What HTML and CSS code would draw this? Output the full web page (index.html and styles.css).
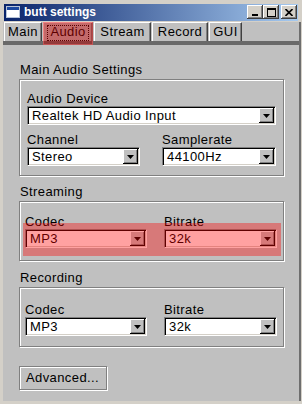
FILE: index.html
```html
<!DOCTYPE html>
<html>
<head>
<meta charset="utf-8">
<title>butt settings</title>
<link rel="stylesheet" href="styles.css">
</head>
<body>
<div class="window">
  <div class="titlebar">
    <svg class="app-icon" width="14" height="12" viewBox="0 0 14 12"><rect x="0.5" y="0.5" width="13" height="11" fill="#fff" stroke="#b8c4d8"/><rect x="1" y="1" width="12" height="3" fill="#1c48a0"/></svg>
    <span class="title">butt settings</span>
    <div class="caption-btns">
      <span class="cbtn"><svg width="8" height="8" viewBox="0 0 8 8"><rect x="1" y="6" width="6" height="2" fill="#000"/></svg></span>
      <span class="cbtn"><svg width="9" height="9" viewBox="0 0 9 9"><rect x="0.5" y="0.5" width="8" height="8" fill="none" stroke="#000"/><rect x="0" y="0" width="9" height="2" fill="#000"/></svg></span>
      <span class="cbtn cbtn-close"><svg width="8" height="7" viewBox="0 0 8 7"><path d="M0.5 0 L7.5 7 M7.5 0 L0.5 7" stroke="#000" stroke-width="1.6" fill="none"/></svg></span>
    </div>
  </div>
  <div class="frame-body">
    <div class="tabs">
      <div class="tab tab-main">Main</div>
      <div class="tab tab-audio tab-active">Audio</div>
      <div class="tab tab-stream">Stream</div>
      <div class="tab tab-record">Record</div>
      <div class="tab tab-gui">GUI</div>
    </div>
    <div class="tab-band"></div>
    <div class="panel">
      <section class="group group-main">
        <div class="group-label">Main Audio Settings</div>
        <div class="frame frame-main">
          <div class="field">
            <div class="field-label">Audio Device</div>
            <div class="choice"><span class="choice-text">Realtek HD Audio Input</span><span class="choice-btn"><svg width="7" height="4" viewBox="0 0 7 4"><polygon points="0,0 7,0 3.5,4" fill="#000"/></svg></span></div>
          </div>
          <div class="row row-main">
            <div class="field">
              <div class="field-label">Channel</div>
              <div class="choice"><span class="choice-text">Stereo</span><span class="choice-btn"><svg width="7" height="4" viewBox="0 0 7 4"><polygon points="0,0 7,0 3.5,4" fill="#000"/></svg></span></div>
            </div>
            <div class="field">
              <div class="field-label">Samplerate</div>
              <div class="choice"><span class="choice-text">44100Hz</span><span class="choice-btn"><svg width="7" height="4" viewBox="0 0 7 4"><polygon points="0,0 7,0 3.5,4" fill="#000"/></svg></span></div>
            </div>
          </div>
        </div>
      </section>

      <section class="group group-stream">
        <div class="group-label">Streaming</div>
        <div class="frame frame-stream">
          <div class="row row-codec">
            <div class="field">
              <div class="field-label">Codec</div>
              <div class="choice"><span class="choice-text">MP3</span><span class="choice-btn"><svg width="7" height="4" viewBox="0 0 7 4"><polygon points="0,0 7,0 3.5,4" fill="#000"/></svg></span></div>
            </div>
            <div class="field">
              <div class="field-label">Bitrate</div>
              <div class="choice"><span class="choice-text">32k</span><span class="choice-btn"><svg width="7" height="4" viewBox="0 0 7 4"><polygon points="0,0 7,0 3.5,4" fill="#000"/></svg></span></div>
            </div>
          </div>
          <div class="highlight"></div>
        </div>
      </section>

      <section class="group group-rec">
        <div class="group-label">Recording</div>
        <div class="frame frame-rec">
          <div class="row row-codec">
            <div class="field">
              <div class="field-label">Codec</div>
              <div class="choice"><span class="choice-text">MP3</span><span class="choice-btn"><svg width="7" height="4" viewBox="0 0 7 4"><polygon points="0,0 7,0 3.5,4" fill="#000"/></svg></span></div>
            </div>
            <div class="field">
              <div class="field-label">Bitrate</div>
              <div class="choice"><span class="choice-text">32k</span><span class="choice-btn"><svg width="7" height="4" viewBox="0 0 7 4"><polygon points="0,0 7,0 3.5,4" fill="#000"/></svg></span></div>
            </div>
          </div>
        </div>
      </section>

      <div class="btn">Advanced...</div>
    </div>
  </div>
</div>
</body>
</html>
```
FILE: styles.css
```css
html, body {
  margin: 0;
  padding: 0;
}
body {
  background: #d4d0c8;
  width: 302px;
  height: 404px;
  overflow: hidden;
  font-family: "Liberation Sans", Arial, sans-serif;
  font-size: 13px;
  letter-spacing: 0.4px;
  color: #000;
}
.window {
  margin-left: 3px;
  width: 298px;
  padding-top: 4px;
}
.titlebar {
  margin-left: 1px;
  width: 294px;
  height: 17px;
  background: linear-gradient(90deg, #0a246a 0%, #a6caf0 100%);
  display: flex;
  align-items: flex-start;
}
.app-icon {
  display: block;
  margin: 2px 0 0 2px;
}
.title {
  margin-left: 4px;
  color: #fff;
  font-weight: bold;
  font-size: 12px;
  letter-spacing: 0;
  line-height: 17px;
}
.caption-btns {
  margin-left: auto;
  margin-right: 1px;
  margin-top: 1px;
  display: flex;
}
.cbtn {
  width: 16px;
  height: 14px;
  box-sizing: border-box;
  background: #d4d0c8;
  box-shadow: inset -1px -1px #404040, inset 1px 1px #fff, inset -2px -2px #808080;
  display: flex;
  align-items: center;
  justify-content: center;
}
.cbtn svg {
  display: block;
}
.cbtn-close {
  margin-left: 2px;
}
.frame-body {
  margin-top: 1px;
  height: 379px;
  background: #c0c0c0;
  border-right: 2px solid #6e6e6e;
}
.tabs {
  display: flex;
  gap: 1px;
  height: 19px;
  padding-left: 1px;
}
.tab {
  position: relative;
  box-sizing: border-box;
  height: 19px;
  border-top: 1px solid #fff;
  border-left: 1px solid #fff;
  border-right: 1px solid #404040;
  box-shadow: inset -1px 0 #808080;
  line-height: 18px;
  text-align: center;
}
.tab-main { width: 38px; }
.tab-audio { width: 50px; }
.tab-stream { width: 57px; }
.tab-record { width: 56px; }
.tab-gui { width: 33px; }
.tab-active::before {
  content: "";
  position: absolute;
  left: 3px;
  right: 3px;
  top: 2px;
  bottom: 0;
  border: 1px dotted #000;
}
.tab-active::after {
  content: "";
  position: absolute;
  left: -1px;
  right: -1px;
  top: -1px;
  bottom: -4px;
  background: rgba(200, 0, 0, 0.45);
  box-shadow: inset 0 0 0 1px rgba(255, 120, 120, 0.45);
  z-index: 2;
}
.tab-band {
  height: 4px;
  background: #696969;
  border-top: 0;
}
.panel {
  padding-left: 16px;
}
.group-label {
  line-height: 14px;
  margin-left: 1px;
}
.group-main { padding-top: 18px; }
.group-stream { padding-top: 9px; }
.group-rec { padding-top: 10px; }

.frame {
  position: relative;
  box-sizing: border-box;
  width: 265px;
  margin-top: 2px;
  border: 1px solid #808080;
  box-shadow: inset 1px 1px #fff, 1px 1px #fff;
}
.frame-main { padding: 12px 7px 9px 7px; }
.frame-stream { padding: 13px 6px 12px 5px; }
.frame-rec { padding: 15px 6px 10px 5px; }

.field-label {
  line-height: 14px;
}
.row {
  display: grid;
}
.row-main {
  grid-template-columns: 113px 114px;
  column-gap: 22px;
  margin-top: 8px;
}
.row-codec {
  grid-template-columns: 122px 113px;
  column-gap: 17px;
}
.choice {
  box-sizing: border-box;
  height: 19px;
  display: flex;
  background: #fff;
  border: 1px solid;
  border-color: #808080 #fff #fff #808080;
  box-shadow: inset 1px 1px #000, inset -1px -1px #d4d0c8;
  padding: 1px;
}
.choice-text {
  flex: 1;
  padding-left: 3px;
  line-height: 15px;
  white-space: nowrap;
  overflow: hidden;
}
.choice-btn {
  width: 15px;
  height: 15px;
  box-sizing: border-box;
  background: #c0c0c0;
  box-shadow: inset -1px -1px #000, inset 1px 1px #fff, inset -2px -2px #808080;
  display: flex;
  align-items: center;
  justify-content: center;
}
.choice-btn svg {
  display: block;
}
.highlight {
  position: absolute;
  left: 3px;
  top: 21px;
  width: 258px;
  height: 33px;
  background: rgba(255, 0, 0, 0.37);
}
.btn {
  box-sizing: border-box;
  width: 88px;
  height: 24px;
  margin-top: 19px;
  border: 1px solid #808080;
  box-shadow: inset 1px 1px #fff, 1px 1px #fff;
  padding-left: 6px;
  line-height: 22px;
}
```
